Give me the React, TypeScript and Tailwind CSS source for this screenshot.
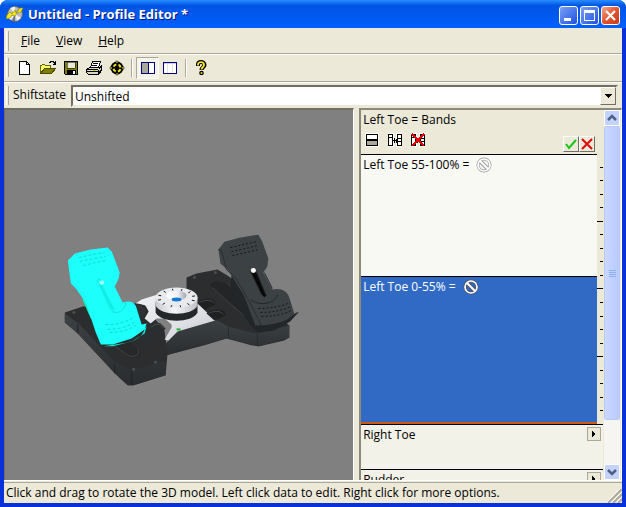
import { useState } from "react";
import type { ReactNode } from "react";

const TICKS = Array.from({ length: 19 }, (_, i) => i + 1);
const DIAL_MARKS = Array.from({ length: 12 }, (_, i) => (i * Math.PI * 2) / 12 + 0.3);

function Gripper() {
    return <span className="w-[3px] self-stretch my-px mr-1 border-r border-[#aca899] border-l border-l-white shrink-0" />;
}

function Separator() {
    return <span className="w-0.5 h-[18px] mx-[3px] bg-[#aca899] border-r border-white shrink-0" />;
}

function AppLogo() {
    return (
        <svg className="w-[18px] h-[18px]" viewBox="0 0 18 18">
            <circle cx="9" cy="9" r="7.5" fill="#b9bcc0" stroke="#60646c" />
            <path d="M9 9 4 3 9 1.5ZM9 9l6 4-4 3ZM9 9 2 13 5 15Z" fill="#eef0f2" />
            <path d="M9 9 13 3 16 6ZM9 9 9 16 6 16Z" fill="#6d7178" />
            <path d="m1 10 3-3 2 2 3-4 1 3 4-5 3 0-2 4-4 1-2 3-3-1-2 3-4 1Z" fill="#f5e914" stroke="#8c850c" strokeWidth=".6" />
        </svg>
    );
}

function NewIcon() {
    return (
        <svg className="w-4 h-4" viewBox="0 0 16 16" shapeRendering="crispEdges">
            <path d="M2.5 1.5h7l3 3v10h-10ZM9.5 1.5v3h3" fill="#fff" stroke="#000" />
        </svg>
    );
}

function OpenIcon() {
    return (
        <svg className="w-4 h-4" viewBox="0 0 16 16" shapeRendering="crispEdges">
            <path d="M.5 13.5v-8h1l1-1h2l1 1h5v3h-6l-4 5" fill="#ffff66" stroke="#666600" />
            <path d="m.5 13.5 4-5h11l-4 5Z" fill="#808000" stroke="#4c4c00" />
            <path d="M9 2.5h1l1-1h2l2 2M15.5 1v3.500h-3" fill="none" stroke="#000" />
        </svg>
    );
}

function SaveIcon() {
    return (
        <svg className="w-4 h-4" viewBox="0 0 16 16" shapeRendering="crispEdges">
            <path d="M1.500 1.500h13v13h-12l-1-1Z" fill="#808000" stroke="#000" />
            <path d="M4 2h8v6H4Z" fill="#ece9d8" stroke="#000" strokeWidth=".5" />
            <path d="M4 10h9v4H4Z" fill="#000" />
            <path d="M10 11h2v3h-2Z" fill="#fff" />
        </svg>
    );
}

function PrintIcon() {
    return (
        <svg className="w-4 h-4" viewBox="0 0 16 16" shapeRendering="crispEdges">
            <path d="m4.500 7.500 2-6h8l-2 6Z" fill="#fff" stroke="#000" />
            <path d="M7 3.500h5M6 5.500h5" stroke="#000" />
            <path d="m.5 9.500 3-2h10l2-2v5l-3 4h-10l-2-2Z" fill="#d8d5c5" stroke="#000" />
            <path d="M.5 9.500h11l1 1v4M12.500 9.500l3-3M1 11.500h11M12.500 12.500l3-3" fill="none" stroke="#000" />
            <path d="M7 10.500h3" stroke="#d8d800" />
        </svg>
    );
}

function TargetIcon() {
    return (
        <svg className="w-4 h-4" viewBox="0 0 16 16">
            <circle cx="8" cy="8" r="6.500" />
            <circle cx="8" cy="8" r="3.600" fill="none" stroke="#f2e51c" strokeWidth="2" strokeDasharray="3.400 2.255" strokeDashoffset="-1.130" />
            <path d="M7 1h2v2H7ZM7 13h2v2H7ZM1 7h2v2H1ZM13 7h2v2h-2Z" fill="#f2e51c" stroke="#000" strokeWidth=".5" />
            <circle cx="8" cy="8" r="1.800" />
        </svg>
    );
}

function SplitIcon() {
    return (
        <svg className="w-4 h-4" viewBox="0 0 16 16" shapeRendering="crispEdges">
            <path d="M2 3h13v11H2Z" fill="#fff" />
            <path d="M2 3h7v11H2Z" fill="#aca899" />
            <path d="M1.500 2.500h13v11h-13ZM8.500 2.500v11" fill="none" stroke="#000080" />
        </svg>
    );
}

function ColumnsIcon() {
    return (
        <svg className="w-4 h-4" viewBox="0 0 16 16" shapeRendering="crispEdges">
            <path d="M.5 2.500h13v11H.5Z" fill="#fff" stroke="#000080" />
            <path d="M1 3.500h12" stroke="#000080" strokeOpacity=".2" />
            <path d="M4.500 4v9M9.500 4v9" stroke="#e6e4da" />
        </svg>
    );
}

function HelpIcon() {
    return (
        <svg className="w-4 h-4" viewBox="0 0 16 16">
            <path d="M4 6V4.500C4 2.500 5.500 2 7 2s3.500.800 3.500 3S7.500 7.500 7.500 10" fill="none" stroke="#000" strokeWidth="4" />
            <path d="M4 5.500V4.500C4 2.800 5.500 2.200 7 2.200s3 .8 3 2.800-2.500 2.500-2.500 4.500" fill="none" stroke="#f2e51c" strokeWidth="1.800" />
            <circle cx="7.500" cy="13" r="2.300" />
            <circle cx="7.500" cy="13" r="1" fill="#f2e51c" />
        </svg>
    );
}

function NoEntry({ color, fill }: { color: string; fill: string }) {
    return (
        <svg className="w-4 h-4" viewBox="0 0 16 16">
            <circle cx="8" cy="8" r="6" fill="none" stroke={color} strokeWidth="3" />
            <path d="m4 4 8 8" stroke={color} strokeWidth="4" />
            <circle cx="8" cy="8" r="6" fill="none" stroke={fill} strokeWidth="1.700" />
            <path d="m4 4 8 8" stroke={fill} strokeWidth="2.200" />
        </svg>
    );
}

function BandIcon() {
    return (
        <svg className="w-4 h-4" viewBox="0 0 16 16" shapeRendering="crispEdges">
            <path d="M1 1h14v14H1Z" fill="#fff" />
            <path d="M2 8h12v5H2Z" fill="#aca899" />
            <path d="M2.500 2.500h11v11h-11Z" fill="none" stroke="#000" />
            <path d="M2 7h12v2H2Z" />
        </svg>
    );
}

function SpreadIcon({ crossed }: { crossed?: boolean }) {
    return (
        <svg className="w-4 h-4" viewBox="0 0 16 16" shapeRendering="crispEdges">
            <path d="M1 1h6v14H1ZM9 1h6v14H9Z" fill="#fff" />
            <path d="M1.500 2.500h4v11h-4ZM1.500 5.500h4M10.500 2.500h4v11h-4ZM10.500 6.500h4M10.500 9.500h4" fill="none" stroke="#000" />
            <path d="M6 8h4M7.500 6v5M9.500 6.500v4" stroke="#000" />
            {crossed && <path d="m2 2 12 12M14 2 2 14" stroke="#e80000" strokeWidth="2.500" />}
        </svg>
    );
}

function ToolButton({ label, pressed, children }: { label: string; pressed?: boolean; children: ReactNode }) {
    return (
        <button
            aria-label={label}
            aria-pressed={pressed}
            className={
                pressed
                    ? "w-[23px] h-[22px] flex items-center justify-center bg-[#f5f4ec] border border-[#aca899] border-r-white border-b-white"
                    : "w-[23px] h-[22px] flex items-center justify-center"
            }
        >
            {children}
        </button>
    );
}

function PedalModel() {
    return (
        <svg className="w-full h-full" viewBox="5 110 349 369" role="img" aria-label="Rudder pedals">
            <defs>
                <linearGradient id="side" x1="0" x2="0" y1="0" y2="1">
                    <stop offset="0" stopColor="#3c4143" />
                    <stop offset="1" stopColor="#2a2d2f" />
                </linearGradient>
                <linearGradient id="metal">
                    <stop offset="0" stopColor="#c9cacf" />
                    <stop offset=".45" stopColor="#f5f5f9" />
                    <stop offset="1" stopColor="#bfc1c8" />
                </linearGradient>
                <linearGradient id="plate" x1="0" y1="0" x2="1" y2="1">
                    <stop offset="0" stopColor="#f0f1f5" />
                    <stop offset=".6" stopColor="#dfe1e7" />
                    <stop offset="1" stopColor="#c6c8cf" />
                </linearGradient>
                <linearGradient id="cup" x1="0" x2="1">
                    <stop offset="0" stopColor="#fff" />
                    <stop offset=".55" stopColor="#eef0f4" />
                    <stop offset="1" stopColor="#9fa3ab" />
                </linearGradient>
            </defs>

            {/* right base */}
            <path d="M187 277 197 273 218 269 228 275 262 300 290 325V337L285 340 260 346 252 345 227 338 205 345 167 355 165 350 187 300Z" fill="#2b2d2f" />
            <path d="M165 344 178 331 218 320 229 326 256 333 290 325V337L260 346 227 338 166 355Z" fill="url(#side)" />
            <path d="M229 326v12M258 333v13" stroke="#292c2e" />
            <path d="M211 284c4-5 12-4 18 1l25 25c3 5-2 8-8 5l-31-26c-4-3-5-4-4-5Z" fill="#232527" />
            <path d="M213 287 245 316M228 283 252 306" stroke="#3a3e40" fill="none" />
            <circle cx="195" cy="277" r="1.500" fill="#4a4f51" />
            <circle cx="216" cy="272" r="1.500" fill="#4a4f51" />

            {/* left base */}
            <path d="M65 312 83 306 124 304 143 302 165 331 168 353 166 375 134 385 128 385 115 373 78 333 65 322Z" fill="#2b2d2f" />
            <path d="m65 313 15 11 35 38 16 8 35-9v14l-32 10-6 0-13-12-37-40-13-11Z" fill="url(#side)" />
            <path d="M78 324v9M115 364v9M132 371v14" stroke="#202224" fill="none" />
            <path d="M105 337c-6-10-1-12 7-7l27 18c5 7-2 12-12 8Z" fill="#26282a" />
            <path d="m110 342 18 13c8 3 13-1 10-7" stroke="#414547" fill="none" />
            <circle cx="74" cy="312" r="1.500" fill="#4a4f51" />
            <circle cx="134" cy="369" r="1.500" fill="#4a4f51" />
            <circle cx="156" cy="362" r="1.500" fill="#4a4f51" />

            {/* plate */}
            <path d="m136 303 6-4 16-5 20-2 21 12 17 16-38 11-9 9-4-1 7-12 0-3-7-6-8 0-6 5-6-5 4-7-3-6-8-2Z" fill="url(#plate)" />
            <path d="m134 305 8-1 4 6-3 6-9 0Z" fill="#303335" />
            <path d="M148 327c2-5 8-6 13-4l5 5-6 9-10 2-10 3Z" fill="#2b2e30" />
            <path d="M152 327c3-5 9-4 12 1" stroke="#484d4f" fill="none" />
            <path d="M198 302c7-6 19-4 18 2l-11 5ZM207 313c7-7 21-4 19 2l-11 5Z" fill="#1e2022" />
            <path d="M200 302c6-3 12-3 15 1M209 313c6-3 12-3 15 1" stroke="#44494b" fill="none" />
            <path d="M177 328h4v2h-4Z" fill="#18b329" />

            {/* dial */}
            <path d="M156 302v10c5 11 37 11 42 0v-10Z" fill="#25282a" />
            <path d="M156 297v8c5 11 37 11 42 0v-8Z" fill="url(#metal)" />
            <ellipse cx="177" cy="297" rx="21" ry="10" fill="#e9eaee" />
            {DIAL_MARKS.map((a) => (
                <line
                    key={a}
                    x1={177 + Math.cos(a) * 16}
                    y1={297.5 + Math.sin(a) * 7.5}
                    x2={177 + Math.cos(a) * 19}
                    y2={297.5 + Math.sin(a) * 9.5}
                    stroke="#17191b"
                />
            ))}
            <ellipse cx="177" cy="295" rx="10" ry="5" fill="url(#cup)" />
            <ellipse cx="177" cy="299" rx="5" ry="2" fill="#1479cf" />

            {/* right pedal */}
            <path d="m232 275-1 13 5 15 15 22 8 7 16-2 16-9 8-10-5 3-35-5-17-37Z" fill="#232628" />
            <path d="m219 249 6-8 15-4 19-3 4 7 6 17-1 8-4 6 9 17c8-2 15 1 17 8l5 16c-7 9-23 12-39 12l-11-29-16-26-8-7Z" fill="#3c4244" />
            <path d="m219 249 3 1 5 19 9 8 13 22 13 26 4 0M265 272l8 16" stroke="#292d2f" fill="none" />
            <path d="m253 270 4 1 10 24-2 2-3-3-11-23Z" fill="#080909" stroke="#2c3032" />
            <circle cx="254" cy="270" r="2.500" fill="#fff" />
            <path d="M231 247c9-2 17-4 26-6M232 251c9-2 18-4 26-6M233 255c9-2 18-4 26-6M259 308c12 0 23-2 32-6M261 312c12 0 22-2 31-6M262 316c12 0 22-2 30-6" fill="none" stroke="#15181a" strokeDasharray="2 2" />
            <path d="M251 299c8 7 25 5 27-5" fill="none" stroke="#242729" />
            <path d="m292 319 4-4 3-3" stroke="#292c2e" fill="none" />

            {/* left pedal */}
            <path d="M83 288 83 300 91 318 99 319 92 288Z" fill="#10edb5" />
            <path d="m68 260 7-7 16-4 17-2 4 4 8 21-1 6-4 8 8 16c9-3 13 1 14 6l5 16 5-1-2 6-13 9-19 6-12 0-5-12-10-30-10-14-5-5Z" fill="#1cfffa" />
            <path d="M122 343c12-1 22-7 23-15l2-2-2 7-13 8-19 5-9 0Z" fill="#0cf0d7" />
            <path d="m101 282 13 25 1 4-5-3-11-24Z" fill="#13ece6" />
            <circle cx="102" cy="282" r="2.200" fill="#a7fff9" />
            <path d="M79 257c9-2 17-4 26-5M80 261c9-2 18-4 26-5M83 265c9-2 16-4 24-5M106 324c11 1 22-3 29-8M108 329c11 0 21-3 28-8M110 332c11 0 21-3 27-8" fill="none" stroke="#11d9d1" strokeDasharray="3 2" />
            <path d="M98 282c-1-4 2-4 4-1M112 311c7 3 13-1 14-9" stroke="#13ddd7" fill="none" />
        </svg>
    );
}

function ModifierRow({ label }: { label: string }) {
    return (
        <section className="h-[45px] shrink-0 border-t border-black bg-[#f3f2e9] flex items-start justify-between pl-0.5 pr-0.5 pt-0.5">
            <h2 className="leading-4">{label}</h2>
            <button aria-label={`Open ${label}`} className="w-3.5 h-3.5 border border-[#aca899] bg-[#ece9d8] flex items-center justify-center">
                <svg className="w-1 h-2" viewBox="0 0 4 8" shapeRendering="crispEdges">
                    <path d="m0 1 4 3-4 3Z" />
                </svg>
            </button>
        </section>
    );
}

function BandList() {
    return (
        <div className="flex-1 min-w-0 overflow-hidden flex flex-col">
            <header className="h-11 shrink-0 pl-0.5 bg-[#ece9d8] flex flex-col justify-between">
                <h2 className="pt-0.5 leading-4">Left Toe = Bands</h2>
                <div className="flex items-end pr-2">
                    <div className="flex gap-[7px] pl-px pb-1.5">
                        <button aria-label="Split band"><BandIcon /></button>
                        <button aria-label="Spread bands"><SpreadIcon /></button>
                        <button aria-label="Remove band"><SpreadIcon crossed /></button>
                    </div>
                    <div className="ml-auto flex pb-0.5">
                        <button aria-label="Accept" className="w-4 h-4 border border-white border-r-[#716f64] border-b-[#716f64] flex items-center justify-center">
                            <svg className="w-3 h-3" viewBox="0 0 12 12"><path d="m1 6 3 4 7-8" fill="none" stroke="#12c717" strokeWidth="2" /></svg>
                        </button>
                        <button aria-label="Cancel" className="w-4 h-4 border border-white border-r-[#716f64] border-b-[#716f64] flex items-center justify-center">
                            <svg className="w-3 h-3" viewBox="0 0 12 12"><path d="m1 1 10 10M11 1 1 11" stroke="#e00909" strokeWidth="2" /></svg>
                        </button>
                    </div>
                </div>
            </header>

            <div className="flex shrink-0">
                <div className="flex-1 min-w-0">
                    <div className="h-[122px] border-t border-black bg-[#f9f9f4] pl-0.5 pt-0.5 flex items-start gap-[7px]">
                        <span className="leading-4">Left Toe 55-100% =</span>
                        <NoEntry color="#999" fill="#fff" />
                    </div>
                    <div className="h-[148px] border-t border-black border-b-2 border-b-[#cc5a16] bg-[#316ac5] text-white pl-0.5 pt-0.5 flex items-start gap-[7px]">
                        <span className="leading-4">Left Toe 0-55% =</span>
                        <NoEntry color="#4b5260" fill="#fff" />
                    </div>
                </div>
                <div className="w-1.5 flex flex-col justify-evenly items-end bg-[#ece9d8]">
                    {TICKS.map((n) => (
                        <span key={n} className={n % 5 === 0 ? "w-1.5 h-px bg-black" : "w-[3px] h-px bg-black"} />
                    ))}
                </div>
            </div>

            <ModifierRow label="Right Toe" />
            <ModifierRow label="Rudder" />
        </div>
    );
}

function ScrollBar() {
    return (
        <div className="w-4 shrink-0 flex flex-col bg-[#f6f5f1]">
            <button aria-label="Scroll up" className="h-4 rounded-xs border border-white bg-[#c3d3fd] flex items-center justify-center">
                <svg className="w-2.5 h-2" viewBox="0 0 10 8"><path d="m1 6 4-4 4 4" fill="none" stroke="#4d6185" strokeWidth="2.500" /></svg>
            </button>
            <div className="h-[294px] rounded-xs border border-white outline-1 -outline-offset-1 outline-[#b8cbf6] bg-linear-to-r from-[#cad8fe] to-[#b9cafb] flex flex-col items-center justify-center gap-px">
                <span className="w-[7px] h-px bg-[#8cb0f8]" />
                <span className="w-[7px] h-px bg-[#8cb0f8]" />
                <span className="w-[7px] h-px bg-[#8cb0f8]" />
                <span className="w-[7px] h-px bg-[#8cb0f8]" />
            </div>
            <button aria-label="Scroll down" className="h-4 mt-auto rounded-xs border border-white bg-[#c3d3fd] flex items-center justify-center">
                <svg className="w-2.5 h-2" viewBox="0 0 10 8"><path d="m1 2 4 4 4-4" fill="none" stroke="#4d6185" strokeWidth="2.500" /></svg>
            </button>
        </div>
    );
}

export default function App() {
    const [shiftstate, setShiftstate] = useState("Unshifted");

    return (
        <div className="h-screen bg-[#0831d9] rounded-t-lg flex flex-col overflow-hidden text-[12px] text-black font-['Open_Sans','Noto_Sans',sans-serif]">
            <header className="h-7 shrink-0 pl-1.5 pr-0.5 flex items-center bg-linear-to-b from-[#2a8bff] via-[#0054e3] via-20% to-[#0260fb]">
                <AppLogo />
                <h1 className="ml-1 mt-0.5 text-white text-[13px] font-bold [text-shadow:1px_1px_#0a1883]">Untitled - Profile Editor *</h1>
                <div className="ml-auto mr-1 flex gap-0.5 pt-0.5">
                    <button aria-label="Minimize" className="w-[19px] h-[19px] rounded-[3px] border border-white bg-linear-to-br from-[#7c9ff5] to-[#1f4fe0] flex items-center justify-center">
                        <svg className="w-[15px] h-[15px]" viewBox="0 0 15 15"><path d="M3 10h7v3H3Z" fill="#fff" /></svg>
                    </button>
                    <button aria-label="Maximize" className="w-[19px] h-[19px] rounded-[3px] border border-white bg-linear-to-br from-[#7c9ff5] to-[#1f4fe0] flex items-center justify-center">
                        <svg className="w-[15px] h-[15px]" viewBox="0 0 15 15"><path d="M2 2h11v11H2ZM3 5v7h9V5Z" fill="#fff" fillRule="evenodd" /></svg>
                    </button>
                    <button aria-label="Close" className="w-[19px] h-[19px] rounded-[3px] border border-white bg-linear-to-br from-[#f0a28a] via-[#e2532c] to-[#c73c11] flex items-center justify-center">
                        <svg className="w-[15px] h-[15px]" viewBox="0 0 15 15"><path d="m3 3 9 9M12 3l-9 9" stroke="#fff" strokeWidth="2.200" /></svg>
                    </button>
                </div>
            </header>

            <div className="flex-1 min-h-0 mx-1 mb-1 bg-[#ece9d8] flex flex-col">
                <nav className="h-[27px] shrink-0 pl-0.5 py-0.5 flex items-center border-b border-white shadow-[inset_0_-1px_#aca899]">
                    <Gripper />
                    <button className="px-2"><u>F</u>ile</button>
                    <button className="px-2"><u>V</u>iew</button>
                    <button className="px-2"><u>H</u>elp</button>
                </nav>

                <div role="toolbar" className="h-7 shrink-0 pl-0.5 pb-1 pt-0.5 flex items-center border-b border-white shadow-[inset_0_-1px_#aca899]">
                    <Gripper />
                    <ToolButton label="New"><NewIcon /></ToolButton>
                    <ToolButton label="Open"><OpenIcon /></ToolButton>
                    <ToolButton label="Save"><SaveIcon /></ToolButton>
                    <ToolButton label="Print"><PrintIcon /></ToolButton>
                    <ToolButton label="Target"><TargetIcon /></ToolButton>
                    <Separator />
                    <ToolButton label="Split view" pressed><SplitIcon /></ToolButton>
                    <ToolButton label="Grid view"><ColumnsIcon /></ToolButton>
                    <Separator />
                    <ToolButton label="Help"><HelpIcon /></ToolButton>
                </div>

                <div className="h-[25px] shrink-0 pl-0.5 pr-1 py-0.5 flex items-center">
                    <Gripper />
                    <label htmlFor="shiftstate" className="mr-[5px] pb-0.5">Shiftstate</label>
                    <div className="relative flex-1 h-[22px]">
                        <select
                            id="shiftstate"
                            value={shiftstate}
                            onChange={(e) => setShiftstate(e.target.value)}
                            className="w-full h-full appearance-none bg-white border-2 border-[#716f64] border-r-[#ece9d8] border-b-[#ece9d8] pl-0.5 pt-0.5 leading-4"
                        >
                            <option>Unshifted</option>
                        </select>
                        <span className="pointer-events-none absolute right-0.5 top-0.5 bottom-0.5 w-4 bg-[#ece9d8] border border-white border-r-[#716f64] border-b-[#716f64] flex items-center justify-center">
                            <svg className="w-[7px] h-1" viewBox="0 0 7 4" shapeRendering="crispEdges"><path d="M0 0h7L3.500 4Z" /></svg>
                        </span>
                    </div>
                </div>

                <main className="flex-1 min-h-0 flex gap-[5px] border-b border-white">
                    <div className="flex-[351] min-w-0 bg-[#808080] border-t-2 border-l border-[#716f64] border-r border-r-white">
                        <PedalModel />
                    </div>
                    <div className="flex-[261] min-w-0 border-t-2 border-l-2 border-[#8d8a7c] border-r border-r-white flex gap-px pr-px">
                        <BandList />
                        <ScrollBar />
                    </div>
                </main>

                <footer className="h-[21px] shrink-0 mt-px pl-0.5 border-t border-[#aca899] flex items-center justify-between">
                    <p className="truncate">Click and drag to rotate the 3D model. Left click data to edit. Right click for more options.</p>
                    <svg className="w-3.5 h-3.5 self-end shrink-0" viewBox="0 0 14 14">
                        <path d="M0 14 14 0M5 14l9-9M10 14l4-4" stroke="#aca899" strokeWidth="2" />
                        <path d="M-1 13 13-1M4 13l9-9M9 13l4-4" stroke="#fff" />
                    </svg>
                </footer>
            </div>
        </div>
    );
}
